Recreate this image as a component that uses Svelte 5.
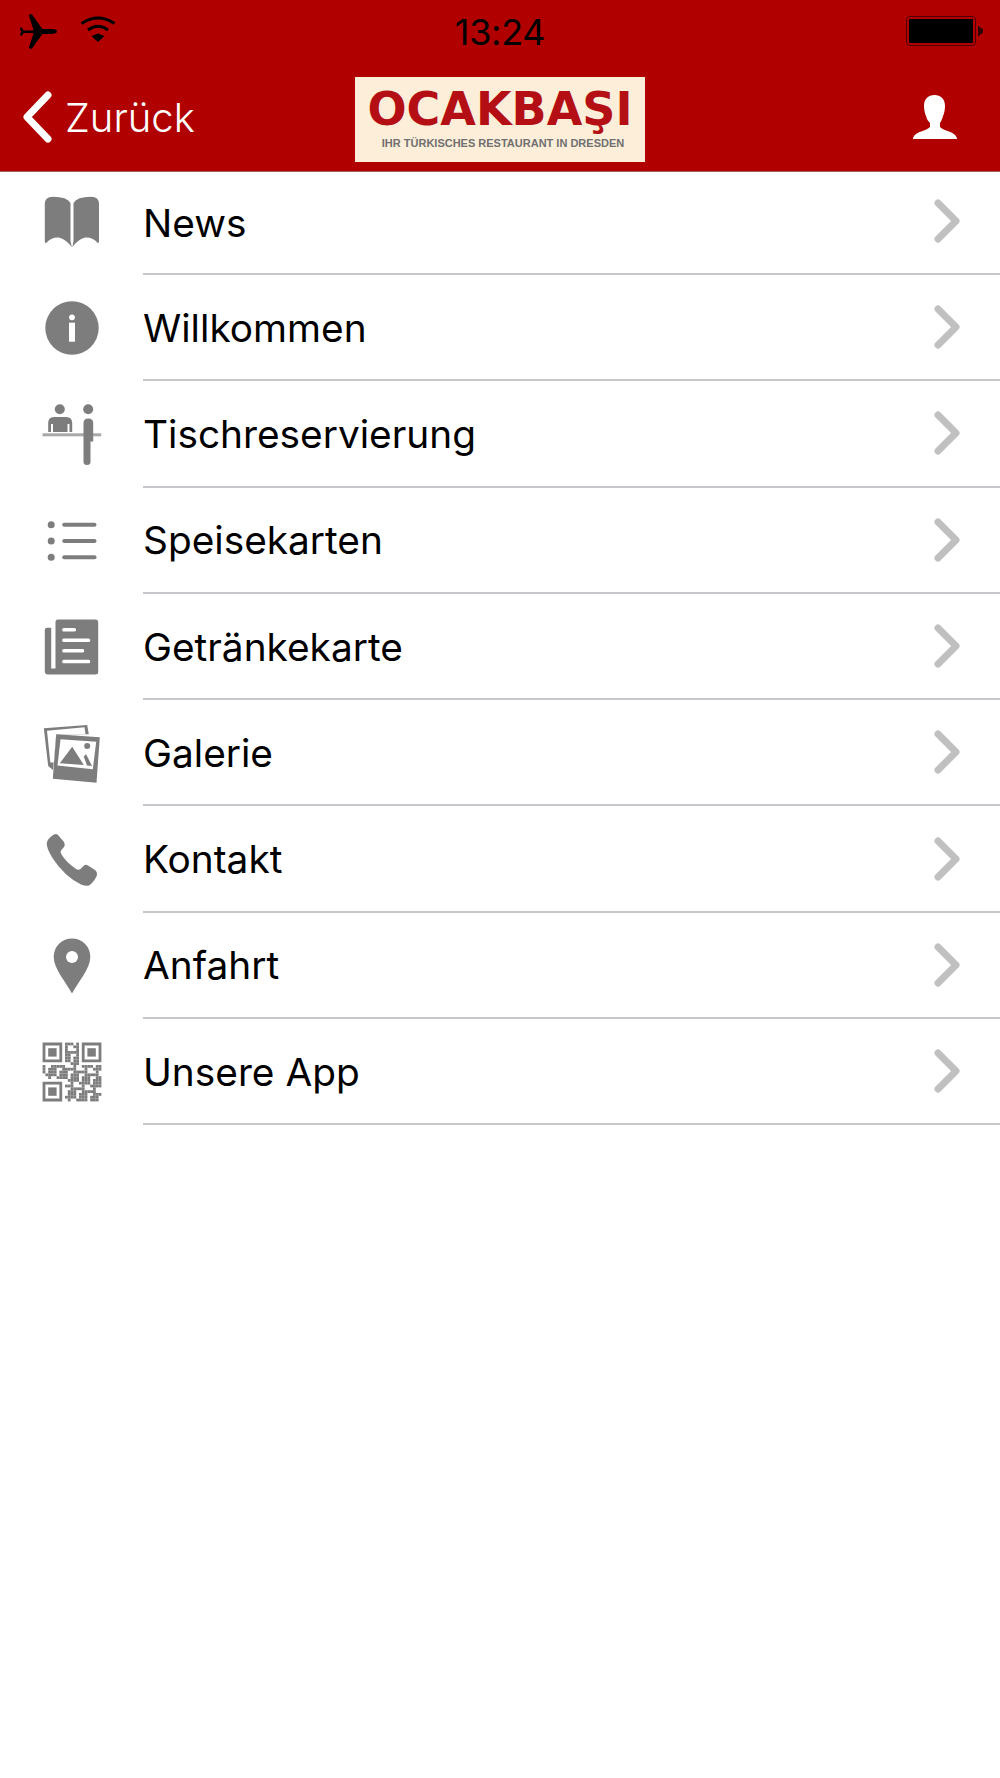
<script>
  const items = [
    { id: 'book', label: 'News' },
    { id: 'info', label: 'Willkommen' },
    { id: 'desk', label: 'Tischreservierung' },
    { id: 'list', label: 'Speisekarten' },
    { id: 'paper', label: 'Getränkekarte' },
    { id: 'photos', label: 'Galerie' },
    { id: 'phone', label: 'Kontakt' },
    { id: 'pin', label: 'Anfahrt' },
    { id: 'qr', label: 'Unsere App' }
  ];

  // finder squares are drawn on their own, the rest is a fixed scatter
  const qrCells = [];
  let seed = 7;
  for (let y = 0; y < 21; y++) {
    for (let x = 0; x < 21; x++) {
      seed = (seed * 31 + 17) % 101;
      const inFinder = (x < 7 && y < 7) || (x > 13 && y < 7) || (x < 7 && y > 13);
      const inGap = (x === 7 && (y < 8 || y > 12)) || (x === 13 && y < 8) || (y === 7 && (x < 8 || x > 12)) || (y === 13 && x < 8);
      if (inFinder || inGap) continue;
      if (seed < 58) qrCells.push({ x, y });
    }
  }
  const finders = [[0, 0], [14, 0], [0, 14]];
</script>

<div class="page">
  <header class="top">
    <div class="status">
      <div class="status__left">
        <svg class="plane" viewBox="0 0 38 36" aria-hidden="true">
          <path d="M0 15 L1 13 L4 17 L14 17 L9 1 L12 0 L23 15.5 L33 15.5 Q38 16 38 18 Q38 20 33 20.5 L23 20.5 L12 36 L9 35 L14 19.5 L4 19.5 L1 23 L0 21 L1 18 Z" />
        </svg>
        <svg class="wifi" viewBox="0 0 36 27" aria-hidden="true">
          <path d="M1.5 7.5 Q18 -3.5 34.5 7.5" />
          <path d="M8 14 Q18 6.5 28 14" />
          <polygon class="wifi__tip" points="18,26 11.5,20 18,17.5 24.5,20" />
        </svg>
      </div>
      <span class="time">13:24</span>
      <div class="battery">
        <div class="battery__body"><div class="battery__fill"></div></div>
        <div class="battery__nub"></div>
      </div>
    </div>
    <nav class="nav">
      <div class="back">
        <svg class="back__chevron" viewBox="0 0 30 52" aria-hidden="true">
          <path d="M26 4 L5 26 L26 48" />
        </svg>
        <span>Zurück</span>
      </div>
      <div class="logo">
        <strong>OCAKBAŞI</strong>
        <small>IHR TÜRKISCHES RESTAURANT IN DRESDEN</small>
      </div>
      <svg class="user" viewBox="0 0 44 44" aria-hidden="true">
        <path d="M21.5 0 C28 0 32 4 32 11 C32 15 31 19 30 21 C29 25 27.5 27 27 28 L27 32 C30 36 42 36 44 43 L44 44 L0 44 L0 43 C2 36 14 36 17 32 L17 28 C16 27 14 25 13 21 C12 19 11 15 11 11 C11 4 15 0 21.5 0 Z" />
      </svg>
    </nav>
  </header>

  <ul class="menu">
    {#each items as item}
      <li class="row">
        <svg class="icon" viewBox="0 0 64 64" aria-hidden="true">
          {#if item.id === 'book'}
            <path d="M4.8 14 Q4.8 6.7 13 6.7 Q27 6.7 30.5 13 L30.5 51 L31.8 57.3 Q27 50 19 47.5 Q11 47 6 53.3 L4.8 52 Z" />
            <path d="M59 14 Q59 6.7 51 6.7 Q37 6.7 33.5 13 L33.5 51 L32.4 57.3 Q37 50 45 47.5 Q53 47 58 53.3 L59 52 Z" />
          {:else if item.id === 'info'}
            <circle cx="32" cy="32" r="26.7" />
            <circle class="cut" cx="32" cy="21.3" r="2.9" />
            <rect class="cut" x="29" y="26.7" width="6" height="19" />
          {:else if item.id === 'desk'}
            <circle cx="19.8" cy="7.3" r="5" />
            <path d="M8.2 30 L8.2 21 Q8.2 15 14 15 L26 15 Q32.2 15 32.2 21 L32.2 30 L29.5 30 L29.5 22 L27.5 22 L27.5 30 L13 30 L13 22 L11 22 L11 30 Z" />
            <rect class="light" x="2.5" y="31.3" width="58.7" height="3" />
            <circle cx="48.2" cy="7.3" r="5" />
            <path d="M43.5 21 Q43.5 16.5 48.3 16.5 Q53.2 16.5 53.2 21 L53.2 39.5 L50.5 39.5 L50.5 60 Q50.5 63 47 63 Q43.5 63 43.5 60 Z" />
          {:else if item.id === 'list'}
            <circle cx="11.2" cy="15.7" r="3.5" />
            <circle cx="11.2" cy="32" r="3.5" />
            <circle cx="11.2" cy="48.3" r="3.5" />
            <rect x="22.2" y="13.7" width="34.3" height="4" rx="2" />
            <rect x="22.2" y="30" width="34.3" height="4" rx="2" />
            <rect x="22.2" y="46.3" width="34.3" height="4" rx="2" />
          {:else if item.id === 'paper'}
            <path d="M18 4.5 L55.5 4.5 Q58.2 4.5 58.2 7 L58.2 57 Q58.2 59.5 55.5 59.5 L8 59.5 Q4.8 59.5 4.8 56 L4.8 15 Q4.8 12.8 7 12.8 L11.2 12.8 L11.2 53.5 L15.5 53.5 L15.5 7 Q15.5 4.5 18 4.5 Z" />
            <rect class="cut" x="22.2" y="13" width="13.8" height="3.5" rx="1.5" />
            <rect class="cut" x="22.2" y="23.5" width="28" height="3.5" rx="1.5" />
            <rect class="cut" x="22.2" y="34" width="22" height="3.5" rx="1.5" />
            <rect class="cut" x="22.2" y="44.8" width="28" height="3.5" rx="1.5" />
          {:else if item.id === 'photos'}
            <polygon points="3.8,7.3 47.2,4 48.8,13.3 16,13.3 13,49 8.2,45" />
            <polygon class="cut" points="7,9.7 44.5,6.3 45.5,13.3 16.2,13.3 13.8,41.5 10.3,41.5" />
            <polygon points="16.2,13.3 59.8,16.3 56.5,61.7 12.8,57.7" />
            <polygon class="cut" points="20.5,18.3 56.2,20.7 52.8,48.3 17.5,44.5" />
            <polygon points="19.8,42.3 32.2,25.7 43.8,44" />
            <polygon points="43.8,35.7 46,33 52,45 47,44.5" />
            <circle cx="47.2" cy="25" r="3" />
          {:else if item.id === 'phone'}
            <path d="M14 6.5 Q16.5 5.5 18 7 L24 14 Q25.5 17 24 19 L21 22.5 Q20 24 21.5 26.5 Q26 34 36 41 Q39 42.5 40.5 41 L43.5 38 Q45.5 36 48 37.5 L55 42 Q58 44.5 56.5 48.5 Q53 55 49 57.5 Q46 58.5 41 56.5 Q24 48 12.5 30 Q6 19.5 6.8 14.5 Q8 10 14 6.5 Z" />
          {:else if item.id === 'pin'}
            <path d="M32 59.5 C26 48 13.7 35 13.7 22.7 A18.3 18.3 0 0 1 50.3 22.7 C50.3 35 38 48 32 59.5 Z" />
            <circle class="cut" cx="32" cy="23" r="6" />
          {:else}
            <g transform="translate(2.6 2.6) scale(2.8)">
              {#each finders as [fx, fy]}
                <path fill-rule="evenodd" d="M{fx} {fy}h7v7h-7z M{fx + 1} {fy + 1}v5h5v-5z" />
                <rect x={fx + 2} y={fy + 2} width="3" height="3" />
              {/each}
              {#each qrCells as cell}
                <rect x={cell.x} y={cell.y} width="1" height="1" />
              {/each}
            </g>
          {/if}
        </svg>
        <div class="row__body">
          <span class="row__label">{item.label}</span>
          <svg class="row__chevron" viewBox="0 0 28 44" aria-hidden="true">
            <path d="M4 4 L22 22 L4 40" />
          </svg>
        </div>
      </li>
    {/each}
  </ul>
</div>

<style>
  :global(body) {
    margin: 0;
    background: #fff;
  }
  .page {
    min-height: 1778px;
    background: #fff;
    font-family: Inter, "Liberation Sans", sans-serif;
  }
  .top {
    height: 171px;
    background: #b00000;
    border-bottom: 1px solid #a06060;
  }
  .status {
    height: 62px;
    display: flex;
    align-items: center;
    justify-content: space-between;
    position: relative;
    padding: 0 17px 0 20px;
  }
  .status__left {
    display: flex;
    align-items: center;
    gap: 23px;
  }
  .plane { width: 37px; height: 35px; fill: #000; }
  .wifi { width: 36px; height: 27px; margin-top: -3px; }
  .wifi path { fill: none; stroke: #000; stroke-width: 3; }
  .wifi__tip { fill: #000; }
  .time {
    position: absolute;
    left: 0;
    right: 0;
    top: 12px;
    text-align: center;
    font-size: 36px;
    line-height: 40px;
    font-weight: 400;
    letter-spacing: -0.3px;
    color: #000;
  }
  .battery {
    display: flex;
    align-items: center;
    gap: 2px;
  }
  .battery__body {
    width: 70px;
    height: 30px;
    box-sizing: border-box;
    padding: 2px;
    border: 1px solid #500000;
    border-radius: 4px;
  }
  .battery__fill { height: 100%; background: #000; border-radius: 1px; }
  .battery__nub {
    width: 5px;
    height: 11px;
    background: #300;
    clip-path: polygon(0 0, 100% 35%, 100% 65%, 0 100%);
  }
  .nav {
    height: 109px;
    display: flex;
    align-items: center;
    position: relative;
    padding: 0 43px 0 22px;
    justify-content: space-between;
  }
  .back {
    display: flex;
    align-items: center;
    gap: 13px;
    color: #fff;
    font-size: 40px;
    line-height: 46px;
    font-weight: 300;
  }
  .back span { margin-top: 2px; }
  .back__chevron {
    width: 30px;
    height: 52px;
    fill: none;
    stroke: #fff;
    stroke-width: 7;
    stroke-linecap: round;
    stroke-linejoin: round;
  }
  .logo {
    position: absolute;
    left: 355px;
    top: 15px;
    width: 290px;
    height: 85px;
    background: #fdeed9;
    display: flex;
    flex-direction: column;
    align-items: center;
  }
  .logo strong {
    margin-top: 8px;
    font-family: "DejaVu Sans", sans-serif;
    font-size: 46px;
    line-height: 48px;
    font-weight: 700;
    color: #b30f14;
    white-space: nowrap;
  }
  .logo small {
    margin: 4px 0 0 6px;
    font-family: "Liberation Sans", Arial, sans-serif;
    font-size: 11px;
    line-height: 13px;
    font-weight: 700;
    color: #707070;
    white-space: nowrap;
  }
  .user { width: 44px; height: 44px; fill: #fff; }
  .menu {
    list-style: none;
    margin: 0;
    padding: 0;
  }
  .row {
    display: flex;
    height: 106.3px;
    align-items: stretch;
  }
  .row:first-child { height: 103px; }
  .row:first-child .icon,
  .row:first-child .row__chevron { margin-bottom: 3px; }
  .icon {
    flex: none;
    width: 64px;
    height: 64px;
    align-self: center;
    margin: 0 39.5px 0 39.5px;
    fill: #7d7d7d;
  }
  .cut { fill: #fff; }
  .light { fill: #a8a8a8; }
  .row__body {
    flex: 1;
    display: flex;
    align-items: center;
    justify-content: space-between;
    padding-right: 38px;
    border-bottom: 2px solid #c8c7cc;
    box-sizing: border-box;
  }
  .row__label {
    margin-top: 1px;
    font-size: 38.8px;
    line-height: 46px;
    color: #000;
    font-weight: 400;
  }
  .row__chevron {
    width: 28px;
    height: 44px;
    fill: none;
    stroke: #c0c0c0;
    stroke-width: 7;
    stroke-linecap: round;
    stroke-linejoin: round;
  }
</style>
